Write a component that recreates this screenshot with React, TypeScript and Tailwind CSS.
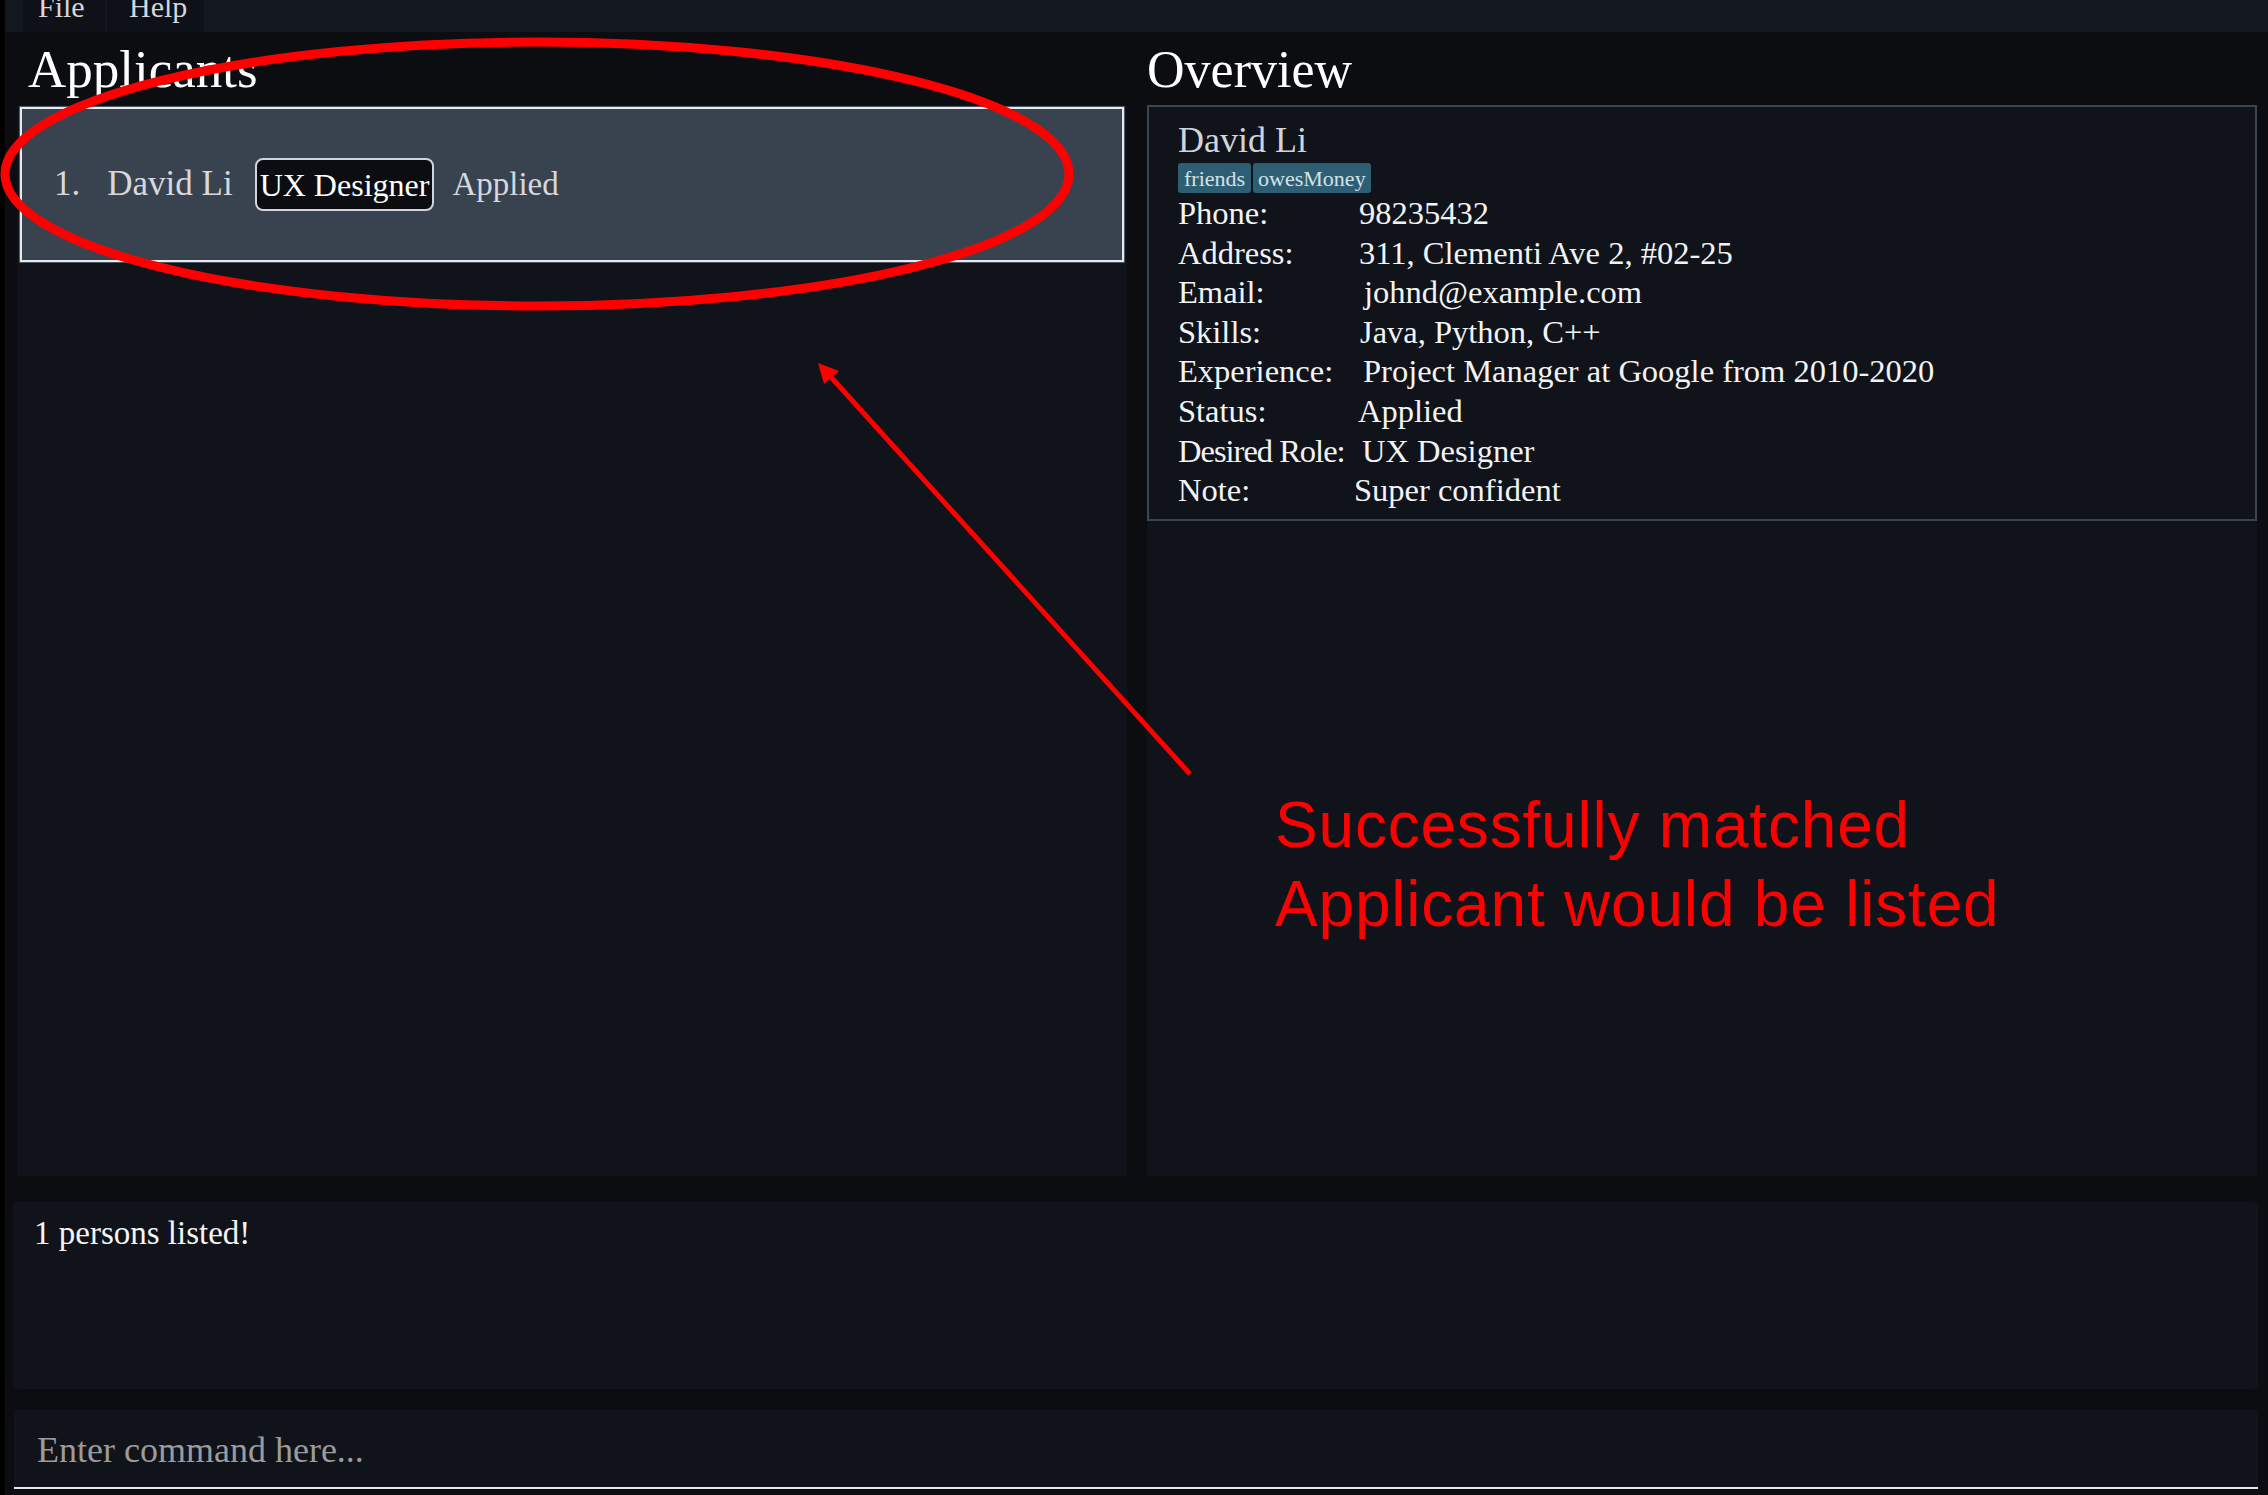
import React from "react";

const rows: { label: string; value: string; off: number; tight?: boolean }[] = [
  { label: "Phone:", value: "98235432", off: 0 },
  { label: "Address:", value: "311, Clementi Ave 2, #02-25", off: 0 },
  { label: "Email:", value: "johnd@example.com", off: 5 },
  { label: "Skills:", value: "Java, Python, C++", off: 1 },
  { label: "Experience:", value: "Project Manager at Google from 2010-2020", off: 4 },
  { label: "Status:", value: "Applied", off: -1 },
  { label: "Desired Role:", value: "UX Designer", off: 3, tight: true },
  { label: "Note:", value: "Super confident", off: -5 },
];

export default function App() {
  return (
    <div className="relative w-[2268px] h-[1495px] overflow-hidden bg-black pl-[5px] font-['Liberation_Serif',serif]">
      <div className="flex h-full flex-col bg-[#0b0d11]">
        {/* Menu bar */}
        <div className="flex h-[32px] shrink-0 bg-[#13171f] pl-[18px]">
          <div className="h-[32px] w-[82px] overflow-hidden bg-[#0e1117] pl-[15px] text-[30px] leading-[14px] text-[#d4d7dc]">
            File
          </div>
          <div className="ml-[2px] h-[32px] w-[97px] overflow-hidden bg-[#0e1117] pl-[22px] text-[30px] leading-[14px] text-[#d4d7dc]">
            Help
          </div>
        </div>

        {/* Panels */}
        <div className="flex h-[1144px] shrink-0 gap-[20px] pl-[12px]">
          {/* Left */}
          <div className="flex w-[1110px] flex-col">
            <div className="h-[73px] shrink-0 pl-[11px] pt-[9px] text-[53px] leading-[56px] text-white">
              Applicants
            </div>
            <div className="flex-1 bg-[#10131a] px-[3px] pt-[2px]">
              <div className="flex h-[155px] items-center border-2 border-[#e8eaed] bg-[#394350] pl-[32px] text-[#d5d8dd] outline outline-1 outline-[#4b5563]">
                <span className="text-[35px]">1.</span>
                <span className="ml-[27px] text-[35px]">David Li</span>
                <span className="ml-[22px] flex h-[53px] items-center rounded-[8px] border-2 border-[#d1d5db] bg-[#0b0d11] px-[3px] text-[32px] text-white">
                  UX Designer
                </span>
                <span className="ml-[18px] text-[33px]">Applied</span>
              </div>
            </div>
          </div>

          {/* Right */}
          <div className="flex w-[1110px] flex-col">
            <div className="h-[73px] shrink-0 pt-[10px] text-[52px] leading-[56px] text-white">
              Overview
            </div>
            <div className="flex-1 bg-[#10131a]">
              <div className="h-[416px] border-2 border-[#3b4451] pl-[29px] pt-[13px]">
                <div className="text-[36px] leading-[40px] text-[#d1d5db]">David Li</div>
                <div className="mt-[3px] flex gap-[2px]">
                  <span className="flex h-[30px] items-center rounded-[3px] bg-[#2e5e73] px-[6px] text-[22px] text-[#d3e2e9]">
                    friends
                  </span>
                  <span className="flex h-[30px] items-center rounded-[3px] bg-[#2e5e73] px-[5px] text-[22px] text-[#d3e2e9]">
                    owesMoney
                  </span>
                </div>
                <div className="mt-[1px]">
                  {rows.map((r) => (
                    <div key={r.label} className="flex h-[39.6px] text-[32.5px] leading-[39.6px] text-[#f2f3f5]">
                      <span
                        className={
                          r.tight
                            ? "w-[181px] shrink-0 whitespace-nowrap tracking-[-1px]"
                            : "w-[181px] shrink-0 whitespace-nowrap"
                        }
                      >
                        {r.label}
                      </span>
                      <span className="whitespace-nowrap" style={{ marginLeft: r.off }}>
                        {r.value}
                      </span>
                    </div>
                  ))}
                </div>
              </div>
            </div>
          </div>
        </div>

        {/* Result display */}
        <div className="ml-[8px] mt-[26px] h-[187px] w-[2245px] shrink-0 rounded-[4px] bg-[#10131a] pl-[21px] pt-[11px] text-[33px] leading-[40px] text-[#f5f5f5]">
          1 persons listed!
        </div>

        {/* Command box */}
        <div className="ml-[9px] mt-[21px] h-[79px] w-[2244px] shrink-0 border-b-2 border-[#e6e6e6] bg-[#10131a] pl-[23px] pt-[18px] text-[36px] leading-[44px] text-[#9b9b9b]">
          Enter command here...
        </div>
      </div>

      {/* Annotation overlay */}
      <svg
        className="pointer-events-none absolute left-0 top-0"
        width="2268"
        height="1495"
        viewBox="0 0 2268 1495"
      >
        <ellipse cx="537" cy="174" rx="532" ry="132" fill="none" stroke="#ff0000" strokeWidth="9" />
        <line x1="1190" y1="774" x2="830" y2="376" stroke="#ff0000" strokeWidth="5" />
        <polygon points="818,363 839,371 824,384" fill="#ff0000" />
      </svg>
      <div className="pointer-events-none absolute left-[1275px] top-[786px] whitespace-nowrap font-['Liberation_Sans',sans-serif] text-[64px] leading-[79px] tracking-[0.8px] text-[#ff0000]">
        <div>Successfully matched</div>
        <div>Applicant would be listed</div>
      </div>
    </div>
  );
}
